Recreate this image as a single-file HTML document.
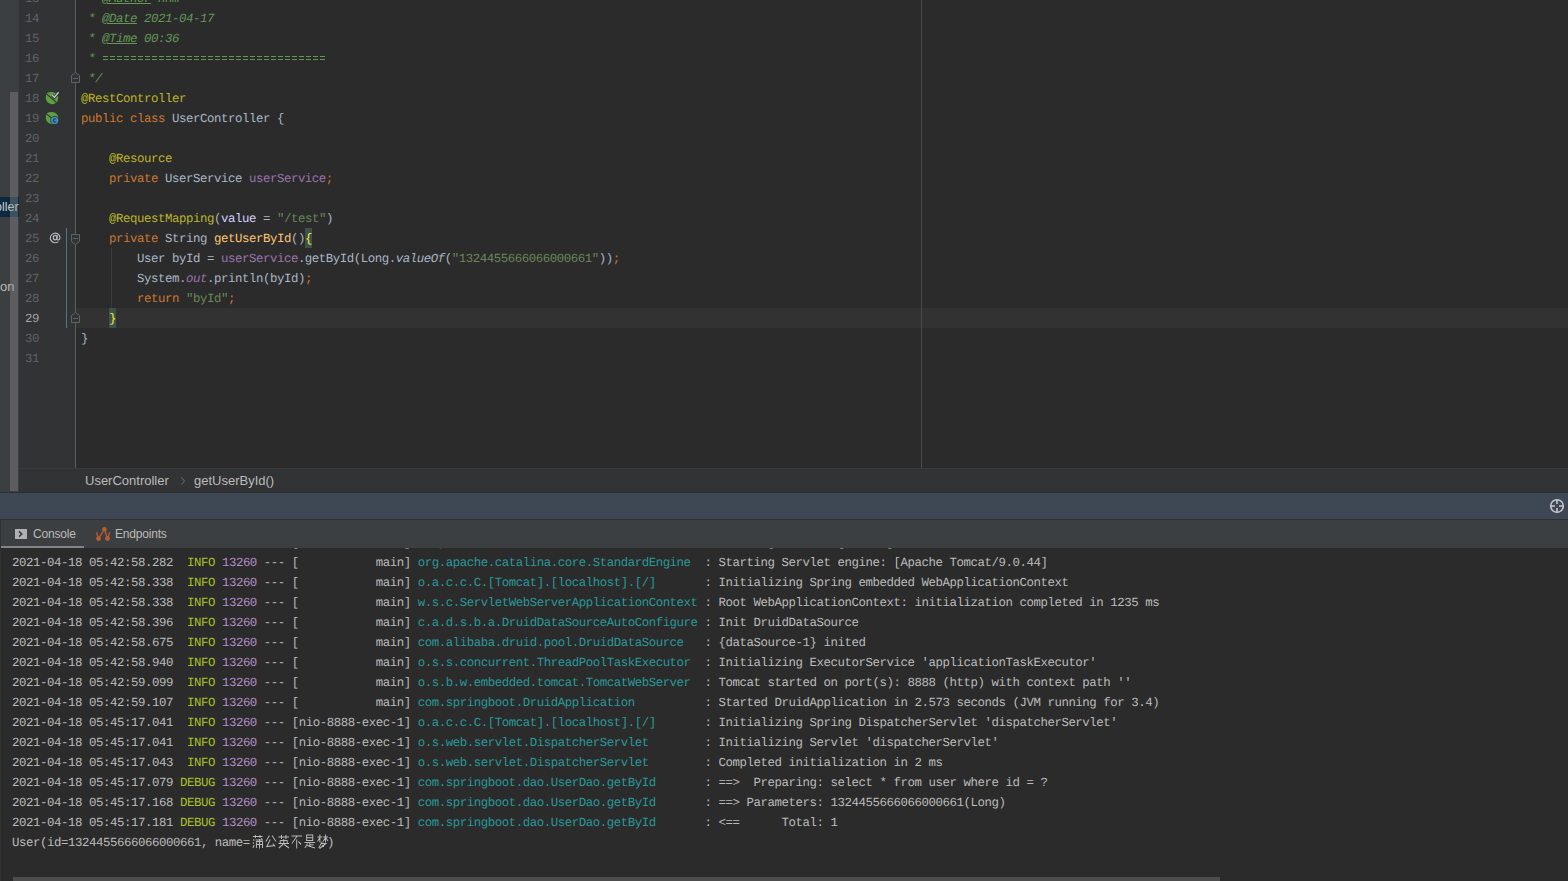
<!DOCTYPE html>
<html><head><meta charset="utf-8">
<style>
*{margin:0;padding:0;box-sizing:border-box}
html,body{width:1568px;height:881px;overflow:hidden;background:#2B2B2B}
body{position:relative;font-family:"Liberation Sans",sans-serif}
.abs{position:absolute}
.mono{font-family:"Liberation Mono",monospace;font-size:12.4px;letter-spacing:-0.44px;text-rendering:geometricPrecision;white-space:pre;line-height:20px;margin-top:1px}
#left{left:0;top:0;width:19px;height:493px;background:#3C3F41;overflow:hidden}
#gutter{left:19px;top:0;width:57px;height:468px;background:#313335}
#editor{left:76px;top:0;width:1492px;height:468px;background:#2B2B2B;overflow:hidden}
#foldline{left:75px;top:0;width:1px;height:468px;background:#5B5D5F}
#margin{left:921px;top:0;width:1px;height:468px;background:#4A4A4A}
#curline{left:76px;top:308px;width:1492px;height:20px;background:#323232}
.ln{position:absolute;left:19px;width:20px;text-align:right;color:#606366}
.code{position:absolute;left:81px}
.dc{color:#629755;font-style:italic}
.tag{text-decoration:underline;text-underline-offset:1px}
.an{color:#BBB529}
.kw{color:#CC7832}
.tx{color:#A9B7C6}
.fd{color:#9876AA}
.st{color:#6A8759}
.md{color:#FFC66D}
.it{font-style:italic}
.pv{color:#D0D0FF}
.br{color:#FFEF28}
#crumb{left:19px;top:468px;width:1549px;height:24px;background:#313335;border-top:1px solid #393B3D}
#crumbb{left:0;top:492px;width:1568px;height:1px;background:#2E2F30}
.crumbtxt{position:absolute;top:473px;font-size:13px;color:#BBBBBB;white-space:pre}
#hdr{left:0;top:493px;width:1568px;height:26px;background:#3D4854}
#hsep{left:0;top:519px;width:1568px;height:1px;background:#2E3032}
#tabs{left:0;top:520px;width:1568px;height:28px;background:#3C3F41}
#console{left:0;top:548px;width:1568px;height:333px;background:#2B2B2B;overflow:hidden}
.cl{position:absolute;left:12px;color:#BBBBBB}
.g{color:#A8C023}
.m{color:#B48DC6}
.c{color:#299999}

.cur{color:#A4A3A3}
#thumb{left:10px;top:92px;width:8px;height:399px;background:rgba(140,140,142,0.4)}
.lefttxt{position:absolute;font-size:13px;color:#BBBBBB;white-space:pre;line-height:20px}
#teal{left:66px;top:228px;width:1px;height:100px;background:#507B74}
.indent{left:111px;top:248px;width:1px;height:60px;background:#3B3B3B}
.tabtxt{position:absolute;top:526px;font-size:12px;letter-spacing:-0.2px;line-height:16px;color:#BBBBBB;white-space:pre}
#hscroll{left:13px;top:877px;width:1207px;height:4px;background:#4D4D4D}
#cborder{left:0;top:548px;width:1px;height:333px;background:#323232}
</style></head>
<body>
<div id="left" class="abs">
<div class="abs" style="left:0;top:197px;width:19px;height:20px;background:#0D293E"></div>
<div class="lefttxt" style="left:-5px;top:196.5px;color:#C6CDD3;font-size:12.5px">oller</div>
<div class="lefttxt" style="left:0px;top:276.5px">on</div>
<div id="thumb" class="abs"></div>
</div>
<div id="gutter" class="abs"></div>
<div id="editor" class="abs"></div>
<div id="curline" class="abs"></div>
<div id="foldline" class="abs"></div>
<div id="margin" class="abs"></div>
<div id="teal" class="abs"></div>
<div class="abs indent"></div>
<div class="abs" style="left:109px;top:308px;width:7px;height:20px;background:#3B514D"></div>
<div class="abs" style="left:305px;top:228px;width:7px;height:20px;background:#3B514D"></div>
<svg class="abs" style="left:0;top:0" width="1568" height="468">
 <g fill="#313335" stroke="#606366" stroke-width="1">
  <path d="M71.5 82.5 V75.5 L75.5 72.5 L79.5 75.5 V82.5 Z"/>
  <path d="M71.5 234.5 H79.5 V241.5 L75.5 244.5 L71.5 241.5 Z"/>
  <path d="M71.5 322.5 V315.5 L75.5 312.5 L79.5 315.5 V322.5 Z"/>
 </g>
 <g stroke="#606366" stroke-width="1">
  <path d="M73 78.5 H78 M73 238.5 H78 M73 318.5 H78"/>
 </g>
 <g>
  <path d="M47.2 93 C50.2 91.2 55.8 91.3 57.8 95.6 C59.5 99.6 56.6 104.2 52.4 104.2 C48.4 104.2 45.8 101.2 45.8 97.6 C45.8 95.8 46.3 94.2 47.2 93 Z" fill="#5DA03F"/>
  <path d="M46.5 93.8 L56.5 102.6" stroke="#313335" stroke-width="1.1"/>
  <path d="M51.8 94.8 L54.4 97.3 L58.6 92.2" stroke="#313335" stroke-width="3" fill="none"/>
  <path d="M51.8 94.8 L54.4 97.3 L58.6 92.2" stroke="#C6CED5" stroke-width="1.35" fill="none"/>
  <path d="M47.2 113 C50.2 111.2 55.8 111.3 57.8 115.6 C59.5 119.6 56.6 124.2 52.4 124.2 C48.4 124.2 45.8 121.2 45.8 117.6 C45.8 115.8 46.3 114.2 47.2 113 Z" fill="#5DA03F"/>
  <path d="M46.5 113.8 L52 118.6" stroke="#313335" stroke-width="1.1"/>
  <circle cx="54.6" cy="120.4" r="4.4" fill="#313335"/>
  <circle cx="54.6" cy="120.4" r="3.7" fill="#3B8DBF"/>
  <path d="M56 119.2 A1.6 1.6 0 1 0 56 121.6" stroke="#1E3F55" stroke-width="1.1" fill="none"/>
 </g>
</svg>
<svg class="abs" style="left:0;top:0" width="80" height="260"><g stroke="#B4B6B8" stroke-width="1.15" fill="none" transform="translate(0,-0.7)"><path d="M58.3 242.3 A4.8 4.8 0 1 1 59.9 237.9 Q59.9 240.7 58 240.7 Q57.1 240.7 57.1 239.6 V235.6"/><ellipse cx="55.1" cy="238.3" rx="1.8" ry="2.3"/></g></svg>
<div class="ln mono" style="top:-12px">13</div>
<div class="code mono" style="top:-12px"><span class="dc"> * <span class="tag">@Author</span> hhm</span></div>
<div class="ln mono" style="top:8px">14</div>
<div class="code mono" style="top:8px"><span class="dc"> * <span class="tag">@Date</span> 2021-04-17</span></div>
<div class="ln mono" style="top:28px">15</div>
<div class="code mono" style="top:28px"><span class="dc"> * <span class="tag">@Time</span> 00:36</span></div>
<div class="ln mono" style="top:48px">16</div>
<div class="code mono" style="top:48px"><span class="dc"> * </span></div>
<div class="abs" style="left:103px;top:56px;width:222px;height:1px;background:repeating-linear-gradient(90deg,#629755 0 5px,transparent 5px 7px)"></div>
<div class="abs" style="left:103px;top:59px;width:222px;height:1px;background:repeating-linear-gradient(90deg,#629755 0 5px,transparent 5px 7px)"></div>
<div class="ln mono" style="top:68px">17</div>
<div class="code mono" style="top:68px"><span class="dc"> */</span></div>
<div class="ln mono" style="top:88px">18</div>
<div class="code mono" style="top:88px"><span class="an">@RestController</span></div>
<div class="ln mono" style="top:108px">19</div>
<div class="code mono" style="top:108px"><span class="kw">public class </span><span class="tx">UserController {</span></div>
<div class="ln mono" style="top:128px">20</div>
<div class="ln mono" style="top:148px">21</div>
<div class="code mono" style="top:148px"><span class="an">    @Resource</span></div>
<div class="ln mono" style="top:168px">22</div>
<div class="code mono" style="top:168px"><span class="kw">    private </span><span class="tx">UserService </span><span class="fd">userService</span><span class="kw">;</span></div>
<div class="ln mono" style="top:188px">23</div>
<div class="ln mono" style="top:208px">24</div>
<div class="code mono" style="top:208px"><span class="an">    @RequestMapping</span><span class="tx">(</span><span class="pv">value</span><span class="tx"> = </span><span class="st">"/test"</span><span class="tx">)</span></div>
<div class="ln mono" style="top:228px">25</div>
<div class="code mono" style="top:228px"><span class="kw">    private </span><span class="tx">String </span><span class="md">getUserById</span><span class="tx">()</span><span class="br">{</span></div>
<div class="ln mono" style="top:248px">26</div>
<div class="code mono" style="top:248px"><span class="tx">        User byId = </span><span class="fd">userService</span><span class="tx">.getById(Long.</span><span class="tx it">valueOf</span><span class="tx">(</span><span class="st">"1324455666066000661"</span><span class="tx">))</span><span class="kw">;</span></div>
<div class="ln mono" style="top:268px">27</div>
<div class="code mono" style="top:268px"><span class="tx">        System.</span><span class="fd it">out</span><span class="tx">.println(byId)</span><span class="kw">;</span></div>
<div class="ln mono" style="top:288px">28</div>
<div class="code mono" style="top:288px"><span class="kw">        return </span><span class="st">"byId"</span><span class="kw">;</span></div>
<div class="ln mono cur" style="top:308px">29</div>
<div class="code mono" style="top:308px"><span class="tx">    </span><span class="br">}</span></div>
<div class="ln mono" style="top:328px">30</div>
<div class="code mono" style="top:328px"><span class="tx">}</span></div>
<div class="ln mono" style="top:348px">31</div>

<div id="crumb" class="abs"></div>
<div id="crumbb" class="abs"></div>
<div class="crumbtxt" style="left:85px">UserController</div>
<svg class="abs" style="left:179px;top:476px" width="8" height="10"><path d="M2.5 1.5 L5.5 5 L2.5 8.5" stroke="#6E7174" stroke-width="1" fill="none"/></svg>
<div class="crumbtxt" style="left:194px">getUserById()</div>
<div id="hdr" class="abs"></div>
<svg class="abs" style="left:1548px;top:497px" width="18" height="18">
 <circle cx="9" cy="9" r="6.3" stroke="#C4C6C8" stroke-width="1.6" fill="none"/>
 <path d="M9 2.5 V7 M9 11 V15.5 M2.5 9 H7 M11 9 H15.5" stroke="#C4C6C8" stroke-width="1.6"/>
</svg>
<div id="hsep" class="abs"></div>
<div id="tabs" class="abs"></div>
<div class="abs" style="left:0;top:520px;width:1px;height:28px;background:#2F3133"></div>
<div class="abs" style="left:1px;top:546px;width:83px;height:2px;background:#7F858B"></div>
<svg class="abs" style="left:15px;top:529px" width="12" height="10">
 <rect x="0" y="0" width="12" height="10" fill="#AFB1B3"/>
 <path d="M4 2.3 L6.8 5 L4 7.7" stroke="#3C3F41" stroke-width="1.6" fill="none"/>
</svg>
<div class="tabtxt" style="left:33px">Console</div>
<svg class="abs" style="left:94px;top:526px" width="18" height="17">
 <g stroke="#BA5C2B" stroke-width="1.3" fill="none">
  <path d="M4.5 12.6 L10.4 3.2 L13.5 12.6 M4.5 12.6 L2.6 6.2 M13.5 12.6 L15.8 6.2"/>
 </g>
 <g fill="#BA5C2B">
  <circle cx="10.4" cy="3.3" r="2.3"/>
  <circle cx="4.5" cy="12.6" r="2.4"/>
  <circle cx="13.5" cy="12.6" r="2.4"/>
 </g>
</svg>
<div class="tabtxt" style="left:115px">Endpoints</div>
<div id="console" class="abs">
<div class="cl mono" style="top:-16px">2021-04-18 05:42:58.282 <span class="g"> INFO</span> <span class="m">13260</span> --- [           main] <span class="c">o.apache.catalina.core.StandardService  </span> : Starting service [Tomcat]</div>
<div class="cl mono" style="top:4px">2021-04-18 05:42:58.282 <span class="g"> INFO</span> <span class="m">13260</span> --- [           main] <span class="c">org.apache.catalina.core.StandardEngine </span> : Starting Servlet engine: [Apache Tomcat/9.0.44]</div>
<div class="cl mono" style="top:24px">2021-04-18 05:42:58.338 <span class="g"> INFO</span> <span class="m">13260</span> --- [           main] <span class="c">o.a.c.c.C.[Tomcat].[localhost].[/]      </span> : Initializing Spring embedded WebApplicationContext</div>
<div class="cl mono" style="top:44px">2021-04-18 05:42:58.338 <span class="g"> INFO</span> <span class="m">13260</span> --- [           main] <span class="c">w.s.c.ServletWebServerApplicationContext</span> : Root WebApplicationContext: initialization completed in 1235 ms</div>
<div class="cl mono" style="top:64px">2021-04-18 05:42:58.396 <span class="g"> INFO</span> <span class="m">13260</span> --- [           main] <span class="c">c.a.d.s.b.a.DruidDataSourceAutoConfigure</span> : Init DruidDataSource</div>
<div class="cl mono" style="top:84px">2021-04-18 05:42:58.675 <span class="g"> INFO</span> <span class="m">13260</span> --- [           main] <span class="c">com.alibaba.druid.pool.DruidDataSource  </span> : {dataSource-1} inited</div>
<div class="cl mono" style="top:104px">2021-04-18 05:42:58.940 <span class="g"> INFO</span> <span class="m">13260</span> --- [           main] <span class="c">o.s.s.concurrent.ThreadPoolTaskExecutor </span> : Initializing ExecutorService &#x27;applicationTaskExecutor&#x27;</div>
<div class="cl mono" style="top:124px">2021-04-18 05:42:59.099 <span class="g"> INFO</span> <span class="m">13260</span> --- [           main] <span class="c">o.s.b.w.embedded.tomcat.TomcatWebServer </span> : Tomcat started on port(s): 8888 (http) with context path &#x27;&#x27;</div>
<div class="cl mono" style="top:144px">2021-04-18 05:42:59.107 <span class="g"> INFO</span> <span class="m">13260</span> --- [           main] <span class="c">com.springboot.DruidApplication         </span> : Started DruidApplication in 2.573 seconds (JVM running for 3.4)</div>
<div class="cl mono" style="top:164px">2021-04-18 05:45:17.041 <span class="g"> INFO</span> <span class="m">13260</span> --- [nio-8888-exec-1] <span class="c">o.a.c.c.C.[Tomcat].[localhost].[/]      </span> : Initializing Spring DispatcherServlet &#x27;dispatcherServlet&#x27;</div>
<div class="cl mono" style="top:184px">2021-04-18 05:45:17.041 <span class="g"> INFO</span> <span class="m">13260</span> --- [nio-8888-exec-1] <span class="c">o.s.web.servlet.DispatcherServlet       </span> : Initializing Servlet &#x27;dispatcherServlet&#x27;</div>
<div class="cl mono" style="top:204px">2021-04-18 05:45:17.043 <span class="g"> INFO</span> <span class="m">13260</span> --- [nio-8888-exec-1] <span class="c">o.s.web.servlet.DispatcherServlet       </span> : Completed initialization in 2 ms</div>
<div class="cl mono" style="top:224px">2021-04-18 05:45:17.079 <span class="g">DEBUG</span> <span class="m">13260</span> --- [nio-8888-exec-1] <span class="c">com.springboot.dao.UserDao.getById      </span> : ==&gt;  Preparing: select * from user where id = ? </div>
<div class="cl mono" style="top:244px">2021-04-18 05:45:17.168 <span class="g">DEBUG</span> <span class="m">13260</span> --- [nio-8888-exec-1] <span class="c">com.springboot.dao.UserDao.getById      </span> : ==&gt; Parameters: 1324455666066000661(Long)</div>
<div class="cl mono" style="top:264px">2021-04-18 05:45:17.181 <span class="g">DEBUG</span> <span class="m">13260</span> --- [nio-8888-exec-1] <span class="c">com.springboot.dao.UserDao.getById      </span> : &lt;==      Total: 1</div>
<div class="cl mono" style="top:284px">User(id=1324455666066000661, name=</div>
<svg width="80" height="16" style="position:absolute;left:251px;top:286px" fill="none" stroke="#BBBBBB" stroke-width="1.1" stroke-linecap="butt">
<g transform="translate(1,0.5) scale(0.88,1)"><path d="M1 2H12M4 0.5V3.5M9 0.5V3.5M1.5 5L2.5 6M1 8L2 9M1 13.5L2.5 10.5M4 5.5H12.5M5 7V13.5M12 7V13.5M5 7H12M5 10H12M8.5 4.5V14M10.5 3.8L11.5 4.8"/></g>
<g transform="translate(14,0.5) scale(0.88,1)"><path d="M5 1L1 7M8 1L12.5 7M6 5L2 12L11 11M9 9L11.5 12"/></g>
<g transform="translate(27,0.5) scale(0.88,1)"><path d="M0.5 2.5H12.5M4 0.5V4.5M9 0.5V4.5M2.5 6H10.5M2.5 6V9M10.5 6V9M0.5 9H12.5M6.5 4.5V9M6.5 9L1 13.5M7 10L12.5 13.5"/></g>
<g transform="translate(40,0.5) scale(0.88,1)"><path d="M0.5 1.5H12.5M7 1.5L1 9M6.5 5V14M8.5 7L11.5 10"/></g>
<g transform="translate(53,0.5) scale(0.88,1)"><path d="M3 0.5H10V6H3ZM3 3.3H10M0.5 8H12.5M6.5 8V12M6.5 10.3H11M4 9L1 13.5M3.5 11L12.5 13.5"/></g>
<g transform="translate(66,0.5) scale(0.88,1)"><path d="M0.5 2.5H6M3.3 0V8M3.3 3L0.5 7M7 2.5H12.5M9.7 0V8M9.7 3L7 7M9.7 3L12.5 6.5M6 7L2 13.5M5 9H10L3 14M6 10.5L8 12"/></g>
</svg>
<div class="cl mono" style="left:327px;top:284px">)</div>
</div>
<div id="cborder" class="abs"></div>
<div id="hscroll" class="abs"></div>
</body></html>
